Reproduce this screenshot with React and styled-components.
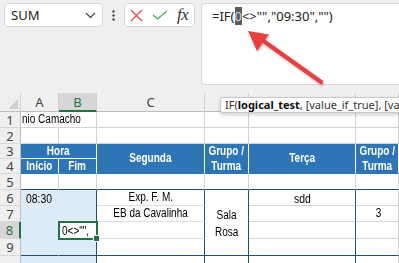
import React from 'react';
import styled, { createGlobalStyle, css } from 'styled-components';

const GlobalStyle = createGlobalStyle`
  html, body {
    margin: 0;
    padding: 0;
    background: #ffffff;
    overflow: hidden;
  }
`;

const UI_FONT = `"Noto Sans", "Open Sans", "DejaVu Sans", sans-serif`;
const CELL_FONT = `"Liberation Sans", Arial, sans-serif`;
const BLUE = '#2e75b6';
const DARK = '#1f4e79';
const GRID = '#d4d4d4';
const GREEN = '#217346';

const Page = styled.div`
  position: relative;
  width: 399px;
  height: 263px;
  overflow: hidden;
  font-family: ${UI_FONT};
`;

const TopBar = styled.div`
  height: 93px;
  box-sizing: border-box;
  background: #efefef;
  display: flex;
  align-items: flex-start;
  padding: 3px 0 0 4px;
`;

const NameBox = styled.div`
  width: 99px;
  height: 24px;
  box-sizing: border-box;
  background: #fff;
  border: 1px solid #d6d6d6;
  border-radius: 4px;
  display: flex;
  align-items: center;
  justify-content: space-between;
  padding: 0 6px 0 6px;
  font-size: 13px;
  color: #222;
`;

const Dots = styled.div`
  width: 21px;
  display: flex;
  justify-content: center;
  padding-top: 7px;
`;

const FxBox = styled.div`
  width: 71px;
  height: 24px;
  box-sizing: border-box;
  background: #fff;
  border: 1px solid #d6d6d6;
  border-radius: 4px;
  display: flex;
  align-items: center;
  gap: 9px;
  padding-left: 5px;
`;

const Fx = styled.span`
  font-family: "Liberation Serif", "DejaVu Serif", serif;
  font-style: italic;
  font-size: 17px;
  color: #333;
  letter-spacing: -0.5px;
`;

const FormulaBar = styled.div`
  position: relative;
  margin-left: 6px;
  flex: 1;
  height: 82px;
  box-sizing: border-box;
  background: #fff;
  border: 1px solid #d6d6d6;
  border-right: none;
  border-radius: 4px 0 0 4px;
  padding: 3px 0 0 10px;
  font-size: 13px;
  color: #222;
  white-space: nowrap;
`;

const Sel = styled.span`
  background: #5e5e5e;
  color: #c8d8f0;
`;

const Arrow = styled.svg`
  position: absolute;
  left: 30px;
  top: 18px;
`;

const Sheet = styled.div`
  display: grid;
  grid-template-columns: 21px 38px 38px 108px 44px 107px 43px;
  grid-template-rows: 19px 16px 16px 15px 15px 16px 16px 16px 17px 17px 10px;
  font-family: ${CELL_FONT};
  font-size: 12.5px;
  color: #000;
`;

const ColHead = styled.div`
  background: ${(p) => (p.$active ? '#d6d6d6' : '#efefef')};
  color: ${(p) => (p.$active ? GREEN : '#444')};
  font-family: ${UI_FONT};
  font-size: 13px;
  display: flex;
  align-items: center;
  justify-content: center;
  border-right: 1px solid #d0d0d0;
  border-bottom: ${(p) => (p.$active ? `2px solid ${GREEN}` : '1px solid #bdbdbd')};
  box-sizing: border-box;
`;

const Corner = styled.div`
  background: #efefef;
  border-right: 1px solid #d0d0d0;
  border-bottom: 1px solid #bdbdbd;
  display: flex;
  align-items: flex-end;
  justify-content: flex-end;
  padding: 0 2px 2px 0;
`;

const RowHead = styled.div`
  background: ${(p) => (p.$active ? '#d6d6d6' : '#efefef')};
  color: ${(p) => (p.$active ? GREEN : '#444')};
  font-family: ${UI_FONT};
  font-size: 13px;
  display: flex;
  align-items: center;
  justify-content: center;
  border-right: ${(p) => (p.$active ? `2px solid ${GREEN}` : '1px solid #bdbdbd')};
  border-bottom: 1px solid #d8d8d8;
  box-sizing: border-box;
`;

const Cell = styled.div`
  box-sizing: border-box;
  grid-column: ${(p) => p.$col} / span ${(p) => p.$cs || 1};
  grid-row: ${(p) => p.$row} / span ${(p) => p.$rs || 1};
  background: ${(p) => p.$bg || '#fff'};
  border-right: 1px solid ${(p) => p.$br || GRID};
  border-bottom: 1px solid ${(p) => p.$bb || GRID};
  display: flex;
  align-items: ${(p) => p.$v || 'center'};
  justify-content: ${(p) => p.$h || 'center'};
  text-align: center;
  white-space: nowrap;
  line-height: 17px;
  ${(p) =>
    p.$head &&
    css`
      background: ${BLUE};
      color: #fff;
      font-weight: bold;
      line-height: 15px;
    `}
`;

/* Arial Narrow look: condensed Liberation Sans */
const Narrow = styled.span`
  display: inline-block;
  font-size: ${(p) => p.$size || 12.5}px;
  transform: scaleX(0.8);
  transform-origin: ${(p) => (p.$left ? 'left center' : 'center')};
  margin-left: ${(p) => p.$pad || 0}px;
  margin-top: ${(p) => p.$top || 0}px;
`;

const Editing = styled.div`
  position: relative;
  grid-column: 3;
  grid-row: 9;
  background: #fff;
  outline: 2px solid ${GREEN};
  outline-offset: -1px;
  display: flex;
  align-items: center;
  padding-left: 3px;
  white-space: nowrap;
  z-index: 1;
  &::after {
    content: '';
    position: absolute;
    right: -3px;
    bottom: -3px;
    width: 5px;
    height: 5px;
    background: ${GREEN};
    border: 1px solid #fff;
  }
`;

const Tooltip = styled.div`
  position: absolute;
  left: 220px;
  top: 97px;
  height: 16px;
  width: 190px;
  box-sizing: border-box;
  background: #fff;
  border: 1px solid #c8c8c8;
  border-radius: 3px;
  box-shadow: 0 2px 4px rgba(0, 0, 0, 0.18);
  font-family: ${UI_FONT};
  font-size: 11px;
  color: #333;
  padding-left: 4px;
  line-height: 14px;
  white-space: nowrap;
  overflow: hidden;
  b {
    color: #111;
  }
`;

const blueCells = { $bg: '#ddebf7', $br: '#ddebf7', $bb: '#ddebf7' };

export default function App() {
  return (
    <Page>
      <GlobalStyle />
      <TopBar>
        <NameBox>
          <span>SUM</span>
          <svg width="11" height="7" viewBox="0 0 11 7">
            <path d="M1 1 L5.5 5.5 L10 1" fill="none" stroke="#444" strokeWidth="1.2" />
          </svg>
        </NameBox>
        <Dots>
          <svg width="3" height="11" viewBox="0 0 3 11">
            <circle cx="1.5" cy="1.5" r="1.2" fill="#444" />
            <circle cx="1.5" cy="5.5" r="1.2" fill="#444" />
            <circle cx="1.5" cy="9.5" r="1.2" fill="#444" />
          </svg>
        </Dots>
        <FxBox>
          <svg width="13" height="13" viewBox="0 0 13 13">
            <path d="M1 1 L12 12 M12 1 L1 12" stroke="#e8484b" strokeWidth="1.3" />
          </svg>
          <svg width="16" height="10" viewBox="0 0 16 10">
            <path d="M1 5 L5.5 9 L15 1" fill="none" stroke="#3fae5a" strokeWidth="1.3" />
          </svg>
          <Fx>fx</Fx>
        </FxBox>
        <FormulaBar>
          =IF(<Sel>0</Sel>&lt;&gt;"","09:30","")
          <Arrow width="100" height="70" viewBox="0 0 100 70">
            <defs>
              <filter id="sh" x="-20%" y="-20%" width="140%" height="140%">
                <feDropShadow dx="1" dy="1.5" stdDeviation="1" floodColor="#000" floodOpacity="0.25" />
              </filter>
            </defs>
            <g filter="url(#sh)">
              <path d="M89 60 L30 18" stroke="#e8403f" strokeWidth="4.5" strokeLinecap="round" />
              <path d="M16 9 L37 12.5 L25 29 Z" fill="#e8403f" />
            </g>
          </Arrow>
        </FormulaBar>
      </TopBar>

      <Sheet>
        <Corner>
          <svg width="10" height="10" viewBox="0 0 10 10">
            <path d="M10 0 L10 10 L0 10 Z" fill="#cfcfcf" />
          </svg>
        </Corner>
        <ColHead>A</ColHead>
        <ColHead $active>B</ColHead>
        <ColHead>C</ColHead>
        <ColHead>D</ColHead>
        <ColHead>E</ColHead>
        <ColHead>F</ColHead>

        {[1, 2, 3, 4, 5, 6, 7, 8, 9, ''].map((n, i) => (
          <RowHead key={i} $active={n === 8} style={{ gridColumn: 1, gridRow: i + 2 }}>
            {n}
          </RowHead>
        ))}

        {/* row 1 */}
        <Cell $col={2} $row={2} $cs={2} $h="flex-start">
          <Narrow $left $pad={1}>nio Camacho</Narrow>
        </Cell>
        <Cell $col={4} $row={2} />
        <Cell $col={5} $row={2} />
        <Cell $col={6} $row={2} />
        <Cell $col={7} $row={2} />

        {/* row 2 */}
        {[2, 3, 4, 5, 6, 7].map((c) => (
          <Cell key={c} $col={c} $row={3} />
        ))}

        {/* rows 3-4 header */}
        <Cell $head $col={2} $row={4} $cs={2} $br="#fff" $bb="#fff"><Narrow>Hora</Narrow></Cell>
        <Cell $head $col={2} $row={5} $br="#fff" $bb={BLUE}><Narrow>Início</Narrow></Cell>
        <Cell $head $col={3} $row={5} $br="#fff" $bb={BLUE}><Narrow>Fim</Narrow></Cell>
        <Cell $head $col={4} $row={4} $rs={2} $br="#fff" $bb={BLUE}><Narrow>Segunda</Narrow></Cell>
        <Cell $head $col={5} $row={4} $rs={2} $br="#fff" $bb={BLUE}><Narrow>Grupo /<br />Turma</Narrow></Cell>
        <Cell $head $col={6} $row={4} $rs={2} $br="#fff" $bb={BLUE}><Narrow>Terça</Narrow></Cell>
        <Cell $head $col={7} $row={4} $rs={2} $br="#fff" $bb={BLUE}><Narrow>Grupo /<br />Turma</Narrow></Cell>

        {/* row 5 */}
        {[2, 3, 4, 5, 6, 7].map((c) => (
          <Cell key={c} $col={c} $row={6} $bb={DARK} />
        ))}

        {/* rows 6-9 */}
        <Cell $col={2} $row={7} $rs={4} {...blueCells} $bb={DARK} $v="flex-start" $h="flex-start">
          <Narrow $left $pad={5} $size={13}>08:30</Narrow>
        </Cell>
        <Cell $col={3} $row={7} $rs={2} {...blueCells} $br={DARK} />
        <Editing>
          <Narrow $left>0&lt;&gt;"",</Narrow>
        </Editing>
        <Cell $col={3} $row={10} {...blueCells} $br={DARK} $bb={DARK} />

        <Cell $col={4} $row={7} $br={DARK} $bb="#dadde3"><Narrow>Exp. F. M.</Narrow></Cell>
        <Cell $col={4} $row={8} $br={DARK} $bb="#dadde3"><Narrow>EB da Cavalinha</Narrow></Cell>
        <Cell $col={4} $row={9} $br={DARK} $bb="#dadde3" />
        <Cell $col={4} $row={10} $br={DARK} $bb={DARK} />

        <Cell $col={5} $row={7} $rs={4} $br={DARK} $bb={DARK}><Narrow $top={3}>Sala<br />Rosa</Narrow></Cell>

        <Cell $col={6} $row={7} $br={DARK} $v="flex-start"><Narrow $size={13}>sdd</Narrow></Cell>
        <Cell $col={6} $row={8} $br={DARK} />
        <Cell $col={6} $row={9} $br={DARK} />
        <Cell $col={6} $row={10} $br={DARK} $bb={DARK} />

        <Cell $col={7} $row={7} />
        <Cell $col={7} $row={8}><Narrow $pad={2}>3</Narrow></Cell>
        <Cell $col={7} $row={9} />
        <Cell $col={7} $row={10} $bb={DARK} />

        {/* row 10 (partial) */}
        <Cell $col={2} $row={11} $cs={2} {...blueCells} $br={DARK} />
        <Cell $col={4} $row={11} $br={DARK} />
        <Cell $col={5} $row={11} $br={DARK} />
        <Cell $col={6} $row={11} $br={DARK} />
        <Cell $col={7} $row={11} />
      </Sheet>

      <Tooltip>
        IF(<b>logical_test</b>, [value_if_true], [value_if_false])
      </Tooltip>
    </Page>
  );
}
